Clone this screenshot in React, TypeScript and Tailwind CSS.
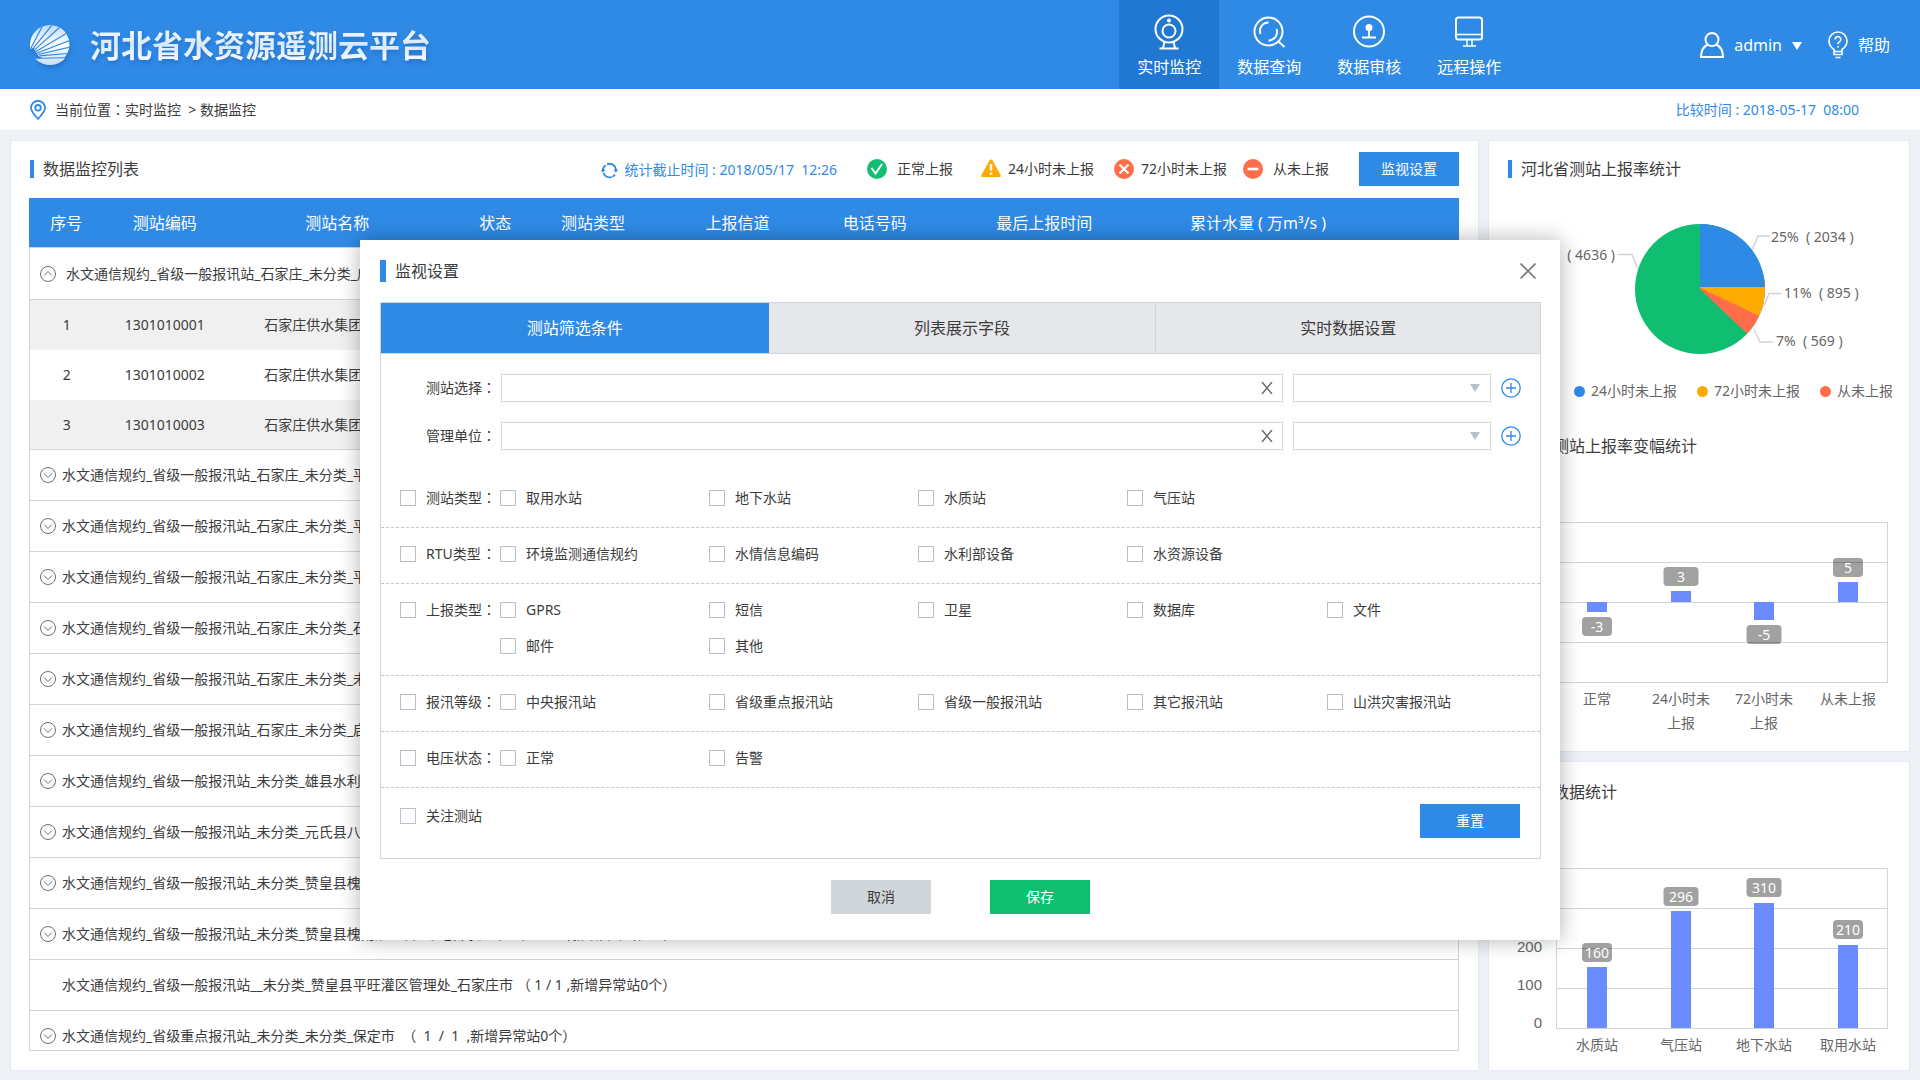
import React, { useState } from "react";

const FONT = "font-['Noto_Sans','Noto_Sans_CJK_SC',sans-serif]";

function Colon() {
  return <span className="font-['Noto_Sans_CJK_TC',sans-serif] leading-none">：</span>;
}

/* ---------- icons ---------- */

function LogoIcon() {
  const rays = ["13,0", "22,0", "30,2", "37,8", "41,15", "43,21.5", "43,28"];
  return (
    <svg width="40" height="40" viewBox="0 0 40 40" className="drop-shadow-[1px_3px_2px_rgba(20,80,160,0.4)]" aria-hidden="true">
      <defs>
        <linearGradient id="logoFill" x1="0" y1="0" x2="0" y2="1">
          <stop offset="0" stopColor="#bcdaf7" />
          <stop offset="0.5" stopColor="#ffffff" />
          <stop offset="1" stopColor="#c6dff8" />
        </linearGradient>
        <clipPath id="logoClip">
          <path d="M0 24A20 20 0 1 1 7 35Q5 33 13 33.500Q8 31 7 29.500L8.500 29Q5 27.500 5.500 26.500L6 26Q3.500 25 4.500 23Q1.500 22.500 0 24Z" />
          <rect x="0" y="33" width="40" height="7" />
        </clipPath>
        <clipPath id="logoRound">
          <circle cx="20" cy="20" r="20" />
        </clipPath>
      </defs>
      <g clipPath="url(#logoRound)">
        <g clipPath="url(#logoClip)">
          <rect width="40" height="40" fill="url(#logoFill)" />
          {rays.map((r, i) => (
            <path key={r} d={`M${1 + i * 1.4} ${23 + i * 1.3}L${r}`} stroke="#2f8ae6" strokeWidth="1.200" />
          ))}
          <path d="M5 33.500L40 32.500" stroke="#2f8ae6" strokeWidth="1.200" />
        </g>
      </g>
    </svg>
  );
}

function NavIcon({ kind }: { kind: string }) {
  return (
    <svg width="36" height="38" viewBox="0 0 36 38" fill="none" stroke="#fff" strokeWidth="2" aria-hidden="true">
      {kind === "monitor" && (
        <>
          <circle cx="18" cy="17" r="13.500" />
          <circle cx="18" cy="19" r="6.500" />
          <circle cx="18" cy="8.500" r="1" fill="#fff" />
          <path d="M13.500 30L12 36M22.500 30L24 36M8.500 36.500h19" />
        </>
      )}
      {kind === "search" && (
        <>
          <circle cx="17.500" cy="19.500" r="14" />
          <path d="M27 29l6.500 6" />
          <path d="M9.500 22a8.500 8.500 0 0 1 8-11.500M25.500 17a8.500 8.500 0 0 1-8 11.500" />
        </>
      )}
      {kind === "audit" && (
        <>
          <circle cx="18" cy="19.500" r="15" />
          <circle cx="18" cy="15.500" r="3.500" fill="#fff" stroke="none" />
          <path d="M18 16v9M11 25.500h14" />
        </>
      )}
      {kind === "remote" && (
        <>
          <rect x="5" y="5.500" width="26" height="22" rx="2.500" />
          <path d="M5 22.500h26M16 28v6M21 28v6M12 34h13" strokeWidth="1.500" />
        </>
      )}
    </svg>
  );
}

function StatusIcon({ kind }: { kind: string }) {
  return (
    <svg width="20" height="20" viewBox="0 0 20 20" fill="none" stroke="#fff" aria-hidden="true">
      {kind === "ok" && (
        <>
          <circle cx="10" cy="10" r="10" fill="#10be71" stroke="none" />
          <path d="M4.500 9l4 5.500L15 5" strokeWidth="2" />
        </>
      )}
      {kind === "warn" && (
        <>
          <path d="M10 0.500Q11 0.500 11.600 1.600L19.700 16.200Q20.300 18 18.500 18H1.500Q-0.300 18 0.300 16.200L8.400 1.600Q9 0.500 10 0.500Z" fill="#ffaa00" stroke="none" />
          <path d="M10 5v6.500M10 13.500v2.200" strokeWidth="2.400" />
        </>
      )}
      {kind === "late" && (
        <>
          <circle cx="10" cy="10" r="10" fill="#ff6d4a" stroke="none" />
          <path d="M5.500 5.500l9 9M14.500 5.500l-9 9" strokeWidth="2.200" />
        </>
      )}
      {kind === "never" && (
        <>
          <circle cx="10" cy="10" r="10" fill="#ff6d4a" stroke="none" />
          <path d="M4.500 10h11" strokeWidth="2.600" />
        </>
      )}
    </svg>
  );
}

function ToggleIcon({ open }: { open: boolean }) {
  return (
    <svg width="16" height="16" viewBox="0 0 16 16" fill="none" stroke="#6e6e6e" aria-hidden="true">
      <circle cx="8" cy="8" r="7.500" />
      <path d={open ? "M4 9.500l4-4 4 4" : "M4 6.500l4 4 4-4"} />
    </svg>
  );
}

/* ---------- header ---------- */

const NAV = [
  { kind: "monitor", label: "实时监控" },
  { kind: "search", label: "数据查询" },
  { kind: "audit", label: "数据审核" },
  { kind: "remote", label: "远程操作" },
];

function Header() {
  return (
    <header className="flex h-[89px] shrink-0 items-center bg-[#2f8ae6] px-[30px] text-white">
      <LogoIcon />
      <h1 className="ml-5 bg-linear-to-b from-white via-[#d6e8fb] to-white bg-clip-text text-[31px] leading-10 font-bold text-transparent drop-shadow-[1px_3px_2px_rgba(20,80,160,0.4)]">
        河北省水资源遥测云平台
      </h1>
      <nav className="mr-[181px] ml-auto flex self-stretch">
        {NAV.map((n, i) => (
          <a
            key={n.label}
            href="#"
            className={"flex w-[100px] flex-col items-center pt-3 text-base leading-6 " + (i === 0 ? "bg-[#2178d2]" : "")}
          >
            <NavIcon kind={n.kind} />
            <span className="mt-[5px]">{n.label}</span>
          </a>
        ))}
      </nav>
      <button type="button" className="flex items-center text-base leading-6">
        <svg width="24" height="26" viewBox="0 0 24 26" fill="none" stroke="#fff" strokeWidth="2" aria-hidden="true">
          <circle cx="12" cy="7.500" r="6.500" />
          <path d="M7.500 12.500Q1 16 1 25H23Q23 16 16.500 12.500" />
        </svg>
        <span className="ml-2.5">admin</span>
        <svg width="10" height="8" viewBox="0 0 10 8" fill="#fff" className="mt-0.5 ml-2.5" aria-hidden="true">
          <path d="M0 0h10L5 8z" />
        </svg>
      </button>
      <a href="#" className="ml-[26px] flex items-center text-base leading-6">
        <svg width="20" height="28" viewBox="0 0 20 28" fill="none" stroke="#fff" strokeWidth="1.600" aria-hidden="true">
          <path d="M6 20.500v-2Q1 15 1 10a9 9 0 0 1 18 0Q19 15 14 18.500v2zM6 20.500v3h8v-3M7.500 26.500h5" />
          <path d="M7.200 8.500a2.800 2.800 0 1 1 4.500 2Q10 11.500 10 13.200M10 15v1.500" />
        </svg>
        <span className="ml-2.5">帮助</span>
      </a>
    </header>
  );
}

/* ---------- station list ---------- */

const STATUSES = [
  { kind: "ok", label: "正常上报", cls: "ml-[30px] gap-2.5" },
  { kind: "warn", label: "24小时未上报", cls: "ml-7 gap-[7px]" },
  { kind: "late", label: "72小时未上报", cls: "ml-5 gap-[7px]" },
  { kind: "never", label: "从未上报", cls: "ml-4 gap-2.5" },
];

const COLS = [
  { label: "序号", w: "w-[5.200%]" },
  { label: "测站编码", w: "w-[8.600%]" },
  { label: "测站名称", w: "w-[15.500%]" },
  { label: "状态", w: "w-[6.600%]" },
  { label: "测站类型", w: "w-[7.100%]" },
  { label: "上报信道", w: "w-[13.100%]" },
  { label: "电话号码", w: "w-[6.100%]" },
  { label: "最后上报时间", w: "w-[17.600%]" },
  { label: "累计水量 ( 万m³/s )", w: "w-[12.300%]" },
  { label: "", w: "" },
];

const STATIONS = ["1301010001", "1301010002", "1301010003"];

const GROUPS = [
  "水文通信规约_省级一般报汛站_石家庄_未分类_平山县",
  "水文通信规约_省级一般报汛站_石家庄_未分类_平山县",
  "水文通信规约_省级一般报汛站_石家庄_未分类_平山县",
  "水文通信规约_省级一般报汛站_石家庄_未分类_石家庄",
  "水文通信规约_省级一般报汛站_石家庄_未分类_未分类",
  "水文通信规约_省级一般报汛站_石家庄_未分类_启用",
  "水文通信规约_省级一般报汛站_未分类_雄县水利局",
  "水文通信规约_省级一般报汛站_未分类_元氏县八一",
  "水文通信规约_省级一般报汛站_未分类_赞皇县槐南",
  "水文通信规约_省级一般报汛站_未分类_赞皇县槐南灌区管理处_石家庄市 （\u00a0 1 /\u00a0 1 ,新增异常站0个）",
  "水文通信规约_省级一般报汛站__未分类_赞皇县平旺灌区管理处_石家庄市 （ 1 / 1 ,新增异常站0个）",
  "水文通信规约_省级重点报汛站_未分类_未分类_保定市\u00a0 （\u00a0 1\u00a0 /\u00a0 1\u00a0 ,新增异常站0个）",
];

function ListPanel() {
  return (
    <section className="flex min-w-0 flex-1 flex-col border border-[#e6e9f2] bg-white pt-[11px] pr-[19px] pb-[19px] pl-[18px]">
      <div className="mb-3 flex h-[34px] shrink-0 items-center">
        <h2 className="flex items-center text-base leading-6">
          <span className="mr-[9px] ml-px h-[18px] w-1 bg-[#2f8ae6]" />
          数据监控列表
        </h2>
        <div className="ml-auto flex items-center gap-1.5 pt-0.5 text-[#2f8ae6]">
          <svg width="17" height="17" viewBox="0 0 17 17" fill="none" stroke="#2f8ae6" strokeWidth="1.800" aria-hidden="true">
            <path d="M1.800 10V8a6.500 6.500 0 0 1 3-4.700M6 2.300a6.500 6.500 0 0 1 9 5.200v2M14 12.500a6.500 6.500 0 0 1-2.500 2.200M11 15a6.500 6.500 0 0 1-8.500-4.200" />
            <path d="M0 9h4.500L2 5.800zM12.500 7.500H17l-2.200 3.200z" fill="#2f8ae6" stroke="none" />
          </svg>
          <span>统计截止时间 : 2018/05/17&nbsp; 12:26</span>
        </div>
        {STATUSES.map((s) => (
          <span key={s.kind} className={"flex items-center " + s.cls}>
            <StatusIcon kind={s.kind} />
            {s.label}
          </span>
        ))}
        <button type="button" className="ml-[30px] h-[34px] w-[100px] bg-[#2f8ae6] text-white">
          监视设置
        </button>
      </div>
      <div className="min-h-0 flex-1 overflow-hidden border-b border-[#cfd5da]">
        <table className="w-full table-fixed border-separate border-spacing-0 text-center">
          <thead>
            <tr>
              {COLS.map((c, i) => (
                <th
                  key={i}
                  scope="col"
                  className={"h-[50px] border-b border-[#cfd5da] bg-[#2f8ae6] p-0 text-base font-normal whitespace-nowrap text-white " + c.w}
                >
                  {c.label}
                </th>
              ))}
            </tr>
          </thead>
          <tbody>
            <tr>
              <td colSpan={10} className="h-[52px] border-x border-b border-[#cfd5da] p-0 pl-2.5">
                <button type="button" aria-expanded="true" className="flex items-center gap-2.5 whitespace-nowrap">
                  <ToggleIcon open />
                  水文通信规约_省级一般报讯站_石家庄_未分类_启用
                </button>
              </td>
            </tr>
            {STATIONS.map((s, i) => (
              <tr key={s} className={i % 2 === 0 ? "bg-[#f0f0f0]" : "bg-white"}>
                <td className={"h-[50px] border-l border-[#cfd5da] p-0 " + (i === 2 ? "border-b" : "")}>{i + 1}</td>
                <td className={"border-[#cfd5da] p-0 " + (i === 2 ? "border-b" : "")}>{s}</td>
                <td className={"overflow-hidden border-[#cfd5da] p-0 pl-[38px] text-left whitespace-nowrap " + (i === 2 ? "border-b" : "")}>
                  石家庄供水集团有限公司
                </td>
                <td colSpan={7} className={"border-r border-[#cfd5da] p-0 " + (i === 2 ? "border-b" : "")} />
              </tr>
            ))}
            {GROUPS.map((g, i) => (
              <tr key={i}>
                <td colSpan={10} className="h-[51px] border-x border-b border-[#cfd5da] p-0 pl-2.5">
                  <button type="button" aria-expanded="false" className="flex items-center gap-1.5 whitespace-nowrap">
                    {i === 10 ? <span className="w-4" /> : <ToggleIcon open={false} />}
                    {g}
                  </button>
                </td>
              </tr>
            ))}
          </tbody>
        </table>
      </div>
    </section>
  );
}

/* ---------- statistics ---------- */

function StatTitle({ children }: { children: React.ReactNode }) {
  return (
    <h2 className="flex h-[18px] items-center text-base leading-[18px]">
      <span className="mr-[9px] h-[18px] w-1 bg-[#2f8ae6]" />
      {children}
    </h2>
  );
}

function Pie() {
  return (
    <svg viewBox="0 0 385 150" className="mt-9 block w-full" fill="#666" fontSize="14" role="img" aria-label="上报率">
      <defs>
        <clipPath id="pieRound">
          <circle cx="192" cy="75" r="65" />
        </clipPath>
      </defs>
      <g fill="none" stroke="#cfd4da" strokeWidth="1.500">
        <path d="M262 22H250L244 36M273 79.500H261L256 92M265 128H252L246 115M110 40.500H124L130 55" />
      </g>
      <g clipPath="url(#pieRound)">
        <rect x="120" y="0" width="150" height="150" fill="#10be71" />
        <path d="M192 75L272 151V60H192z" fill="#ff6d4a" />
        <path d="M192 74L272 111.500V60H192z" fill="#ffaa00" />
        <rect x="192" y="0" width="80" height="73" fill="#2f8ae6" />
      </g>
      <text x="263" y="28">25%&nbsp; ( 2034 )</text>
      <text x="276" y="84">11%&nbsp; ( 895 )</text>
      <text x="268" y="132">7%&nbsp; ( 569 )</text>
      <text x="107" y="46" textAnchor="end">57%&nbsp; ( 4636 )</text>
    </svg>
  );
}

const LEGEND = [
  { label: "正常", dot: "bg-[#10be71]" },
  { label: "24小时未上报", dot: "bg-[#2f8ae6]" },
  { label: "72小时未上报", dot: "bg-[#ffaa00]" },
  { label: "从未上报", dot: "bg-[#ff6d4a]" },
];

type Bar = { x: number; y: number; h: number; value: string; by: number; bw: number; label: string[] };

const CHANGE: Bar[] = [
  { x: 79, y: 102, h: 10, value: "-3", by: 117, bw: 30, label: ["正常"] },
  { x: 163, y: 91, h: 11, value: "3", by: 67, bw: 35, label: ["24小时未", "上报"] },
  { x: 246, y: 102, h: 18, value: "-5", by: 125, bw: 35, label: ["72小时未", "上报"] },
  { x: 330, y: 82, h: 20, value: "5", by: 58, bw: 30, label: ["从未上报"] },
];

const VOLUME: Bar[] = [
  { x: 79, y: 107, h: 61, value: "160", by: 83, bw: 30, label: ["水质站"] },
  { x: 163, y: 51, h: 117, value: "296", by: 27, bw: 35, label: ["气压站"] },
  { x: 246, y: 43, h: 125, value: "310", by: 18, bw: 35, label: ["地下水站"] },
  { x: 330, y: 85, h: 83, value: "210", by: 60, bw: 30, label: ["取用水站"] },
];

function BarChart({ bars, top, height, axis, cls }: { bars: Bar[]; top: number; height: number; axis: string[]; cls: string }) {
  return (
    <svg viewBox={`0 0 385 ${height}`} className={"block w-full " + cls} fontSize="14" fill="#666" textAnchor="middle" role="img">
      <g fill="none" stroke="#cfd5da">
        <rect x="48.500" y={top + 0.5} width="331" height="160" />
        {[40, 80, 120].map((d) => (
          <path key={d} d={`M48 ${top + d + 0.5}h331`} />
        ))}
      </g>
      {axis.map((a, i) => (
        <text key={a} x="34" y={top + 160 - i * 38} textAnchor="end" className="font-['Liberation_Sans',sans-serif]" fontSize="15">
          {a}
        </text>
      ))}
      {bars.map((b) => (
        <g key={b.value}>
          <rect x={b.x} y={b.y} width="20" height={b.h} fill="#6b8cff" />
          <rect x={b.x + 10 - b.bw / 2} y={b.by} width={b.bw} height="19" rx="4" fill="#000" fillOpacity="0.370" />
          <text x={b.x + 10} y={b.by + 15} fill="#fff">
            {b.value}
          </text>
          {b.label.map((l, i) => (
            <text key={l} x={b.x + 10} y={top + 182 + i * 24}>
              {l}
            </text>
          ))}
        </g>
      ))}
    </svg>
  );
}

function Stats() {
  return (
    <aside className="flex w-[422px] shrink-0 flex-col gap-[9px]">
      <section className="border border-[#e6e9f2] bg-white pt-[19px] pr-4 pb-[11px] pl-[19px]">
        <StatTitle>河北省测站上报率统计</StatTitle>
        <Pie />
        <ul className="mt-[15px] flex justify-end gap-5 leading-6 whitespace-nowrap text-[#666]">
          {LEGEND.map((l) => (
            <li key={l.label} className="flex items-center gap-1.5">
              <span className={"size-[11px] rounded-full " + l.dot} />
              {l.label}
            </li>
          ))}
        </ul>
        <div className="mt-[34px]">
          <StatTitle>全省测站上报率变幅统计</StatTitle>
        </div>
        <BarChart bars={CHANGE} top={22} height={240} axis={["-10", "-5", "0", "5", "10"]} cls="mt-[45px]" />
      </section>
      <section className="flex-1 border border-[#e6e9f2] bg-white pt-[21px] pr-4 pl-[19px]">
        <StatTitle>测站数据统计</StatTitle>
        <BarChart bars={VOLUME} top={8} height={200} axis={["0", "100", "200", "300", "400"]} cls="mt-[59px]" />
      </section>
    </aside>
  );
}

/* ---------- settings dialog ---------- */

const TABS = ["测站筛选条件", "列表展示字段", "实时数据设置"];

const FILTERS = [
  { label: "测站类型", options: ["取用水站", "地下水站", "水质站", "气压站"] },
  { label: "RTU类型", options: ["环境监测通信规约", "水情信息编码", "水利部设备", "水资源设备"] },
  { label: "上报类型", options: ["GPRS", "短信", "卫星", "数据库", "文件", "邮件", "其他"] },
  { label: "报汛等级", options: ["中央报汛站", "省级重点报汛站", "省级一般报汛站", "其它报汛站", "山洪灾害报汛站"] },
  { label: "电压状态", options: ["正常", "告警"] },
];

function Check({ children }: { children: React.ReactNode }) {
  return (
    <label className="flex h-9 items-center gap-2.5 whitespace-nowrap">
      <input type="checkbox" className="size-4 shrink-0 appearance-none border border-[#b9bfc9] bg-white checked:bg-[#2f8ae6]" />
      <span>{children}</span>
    </label>
  );
}

function FieldRow({ id, label }: { id: string; label: string }) {
  const [value, setValue] = useState("");
  return (
    <div className="flex h-7 items-center pr-[19px] pl-[45px]">
      <label htmlFor={id} className="w-[75px] whitespace-nowrap">
        {label}
        <Colon />
      </label>
      <div className="relative flex-1">
        <input
          id={id}
          type="text"
          value={value}
          onChange={(e) => setValue(e.target.value)}
          className="block h-7 w-full border border-[#cfd5da] px-2 outline-none"
        />
        <button type="button" aria-label="清除" onClick={() => setValue("")} className="absolute inset-y-0 right-0 flex w-8 items-center justify-center">
          <svg width="12" height="12" viewBox="0 0 12 12" stroke="#666" strokeWidth="1.400" aria-hidden="true">
            <path d="M1 0l10 12M11 0L1 12" />
          </svg>
        </button>
      </div>
      <div className="relative ml-2.5 w-[198px]">
        <select aria-label={label} className="block h-7 w-full appearance-none border border-[#cfd5da] bg-white px-2 outline-none">
          <option value="" />
        </select>
        <svg width="10" height="8" viewBox="0 0 10 8" fill="#b9c0c8" className="pointer-events-none absolute top-2.5 right-[11px]" aria-hidden="true">
          <path d="M0 0h10L5 8z" />
        </svg>
      </div>
      <button type="button" aria-label="添加" className="ml-2.5">
        <svg width="20" height="20" viewBox="0 0 20 20" fill="none" stroke="#2f8ae6" strokeWidth="1.300" aria-hidden="true" className="block">
          <circle cx="10" cy="10" r="9.200" />
          <path d="M10 5v10M5 10h10" />
        </svg>
      </button>
    </div>
  );
}

function Dialog() {
  const [tab, setTab] = useState(0);
  return (
    <div
      role="dialog"
      aria-labelledby="dialog-title"
      className="absolute inset-x-0 top-60 mx-auto w-[62.500%] bg-white pt-5 pr-[19px] pb-[26px] pl-5 shadow-[0_0_20px_rgba(0,0,0,0.3)]"
    >
      <div className="flex h-[22px] items-center">
        <span className="mr-[9px] h-[22px] w-1.5 bg-[#2f8ae6]" />
        <h2 id="dialog-title" className="text-base leading-[22px]">
          监视设置
        </h2>
        <button type="button" aria-label="关闭" className="mr-[5px] ml-auto">
          <svg width="16" height="16" viewBox="0 0 16 16" stroke="#7d7d7d" strokeWidth="1.600" aria-hidden="true">
            <path d="M0.500 0.500l15 15M15.500 0.500l-15 15" />
          </svg>
        </button>
      </div>
      <div className="mt-5 border border-[#cfd5da]">
        <div role="tablist" className="grid h-[51px] grid-cols-[388fr_388fr_384fr] border-b border-[#cfd5da] text-base">
          {TABS.map((t, i) => (
            <button
              key={t}
              type="button"
              role="tab"
              aria-selected={tab === i}
              onClick={() => setTab(i)}
              className={(tab === i ? "bg-[#2f8ae6] text-white" : "bg-[#e6e7eb]") + (i === 1 ? " border-r border-[#cfd5da]" : "")}
            >
              {t}
            </button>
          ))}
        </div>
        <div className="flex flex-col gap-5 pt-5 pb-[22px]">
          <FieldRow id="station" label="测站选择" />
          <FieldRow id="unit" label="管理单位" />
        </div>
        {FILTERS.map((f) => (
          <div key={f.label} className="flex border-b border-dashed border-[#c4c8cd] pt-2 pb-[11px] pl-[19px]">
            <div className="w-[100px] shrink-0">
              <Check>
                <span className="inline-block w-14">{f.label}</span>
                <Colon />
              </Check>
            </div>
            <div className="grid flex-1 grid-cols-[209fr_209fr_209fr_200fr_213fr]">
              {f.options.map((o) => (
                <Check key={o}>{o}</Check>
              ))}
            </div>
          </div>
        ))}
        <div className="flex items-start justify-between pr-5 pb-5 pl-[19px]">
          <div className="pt-2.5">
            <Check>关注测站</Check>
          </div>
          <button type="button" className="mt-4 h-[34px] w-[100px] bg-[#2f8ae6] text-white">
            重置
          </button>
        </div>
      </div>
      <div className="mt-[21px] flex justify-center gap-[59px]">
        <button type="button" className="h-[34px] w-[100px] bg-[#d1d6da]">
          取消
        </button>
        <button type="button" className="h-[34px] w-[100px] bg-[#10be71] text-white">
          保存
        </button>
      </div>
    </div>
  );
}

export default function App() {
  return (
    <div className={"relative flex h-screen flex-col overflow-hidden bg-[#eef2f6] text-sm text-[#3c3c3c] " + FONT}>
      <Header />
      <div className="flex h-[42px] shrink-0 items-center border-b border-[#e6e9f2] bg-white pr-[61px] pl-[30px]">
        <svg width="16" height="20" viewBox="0 0 16 20" fill="none" stroke="#2f8ae6" strokeWidth="1.800" aria-hidden="true">
          <path d="M8 19Q1 11.500 1 7.800a7 7 0 0 1 14 0Q15 11.500 8 19z" />
          <circle cx="8" cy="7.800" r="2.800" />
        </svg>
        <span className="ml-[9px]">
          当前位置
          <Colon />
          实时监控&nbsp; &gt; 数据监控
        </span>
        <span className="ml-auto text-[#2f8ae6]">比较时间 : 2018-05-17&nbsp; 08:00</span>
      </div>
      <main className="flex min-h-0 flex-1 gap-[9px] px-2.5 pt-[9px] pb-[9px]">
        <ListPanel />
        <Stats />
      </main>
      <Dialog />
    </div>
  );
}
